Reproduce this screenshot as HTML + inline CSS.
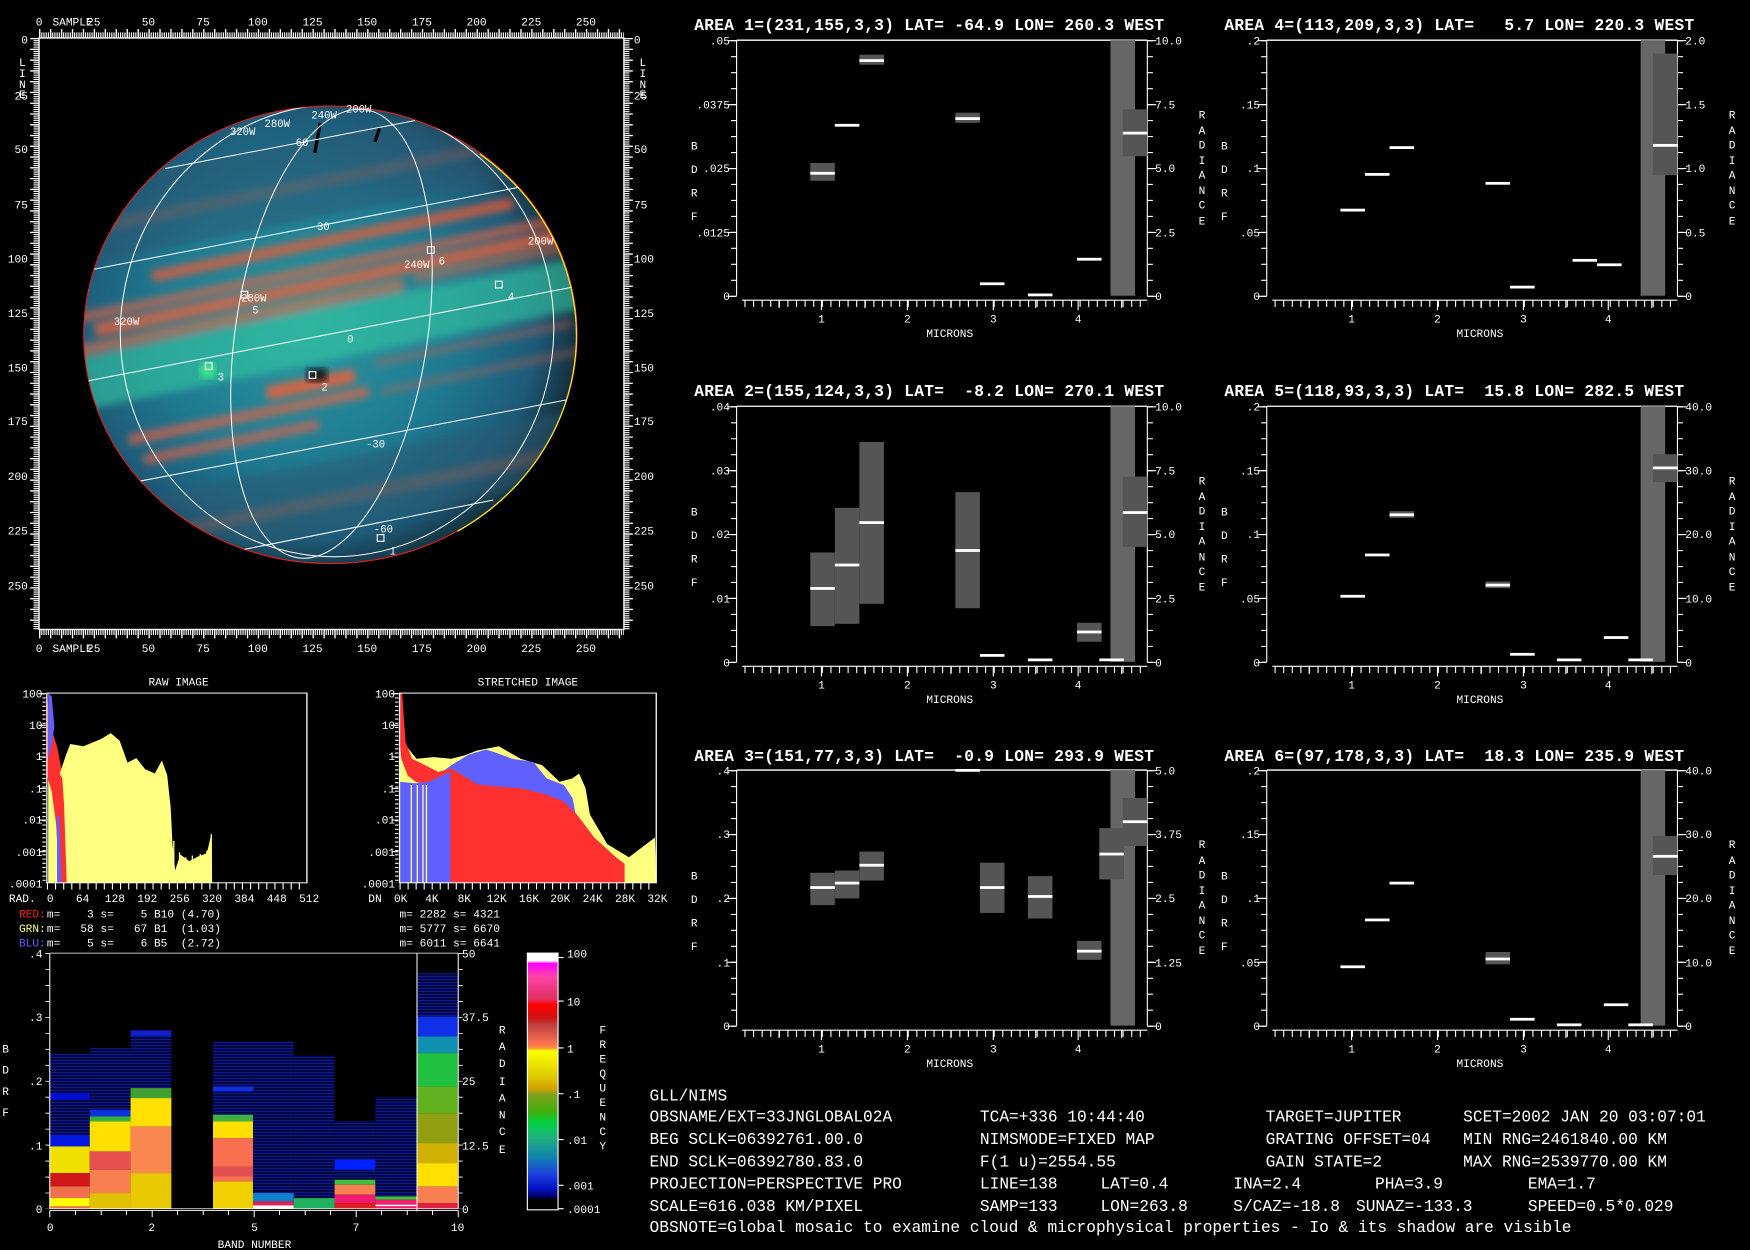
<!DOCTYPE html>
<html><head><meta charset="utf-8"><style>
html,body{margin:0;padding:0;background:#000;width:1750px;height:1250px;overflow:hidden}
svg{display:block}
text{font-family:"Liberation Mono",monospace;fill:#fff;white-space:pre}
.t{font-size:14.5px;font-weight:bold}
.s{font-size:9.5px}
.m{font-size:10px}
.b{font-size:14.5px}
.e{text-anchor:end}
.c{text-anchor:middle}
</style></head><body>
<svg width="1750" height="1250" viewBox="0 0 1568 1120" preserveAspectRatio="none" xmlns="http://www.w3.org/2000/svg">
<defs>
<radialGradient id="jg" cx="0.45" cy="0.48" r="0.55">
<stop offset="0" stop-color="#2a98a0"/><stop offset="0.55" stop-color="#1f7a92"/><stop offset="0.85" stop-color="#1e5a78"/><stop offset="1" stop-color="#14303e"/>
</radialGradient>
<clipPath id="jc"><ellipse cx="296" cy="300" rx="221" ry="205"/></clipPath>
<filter id="bl"><feGaussianBlur stdDeviation="3.5"/></filter>
<linearGradient id="cb" x1="0" y1="0" x2="0" y2="1">
<stop offset="0" stop-color="#fff"/><stop offset="0.03" stop-color="#fff"/><stop offset="0.04" stop-color="#f0f"/><stop offset="0.09" stop-color="#f4a"/><stop offset="0.18" stop-color="#e03060"/><stop offset="0.2" stop-color="#f00"/><stop offset="0.25" stop-color="#d01010"/><stop offset="0.28" stop-color="#c04040"/><stop offset="0.35" stop-color="#f87050"/><stop offset="0.37" stop-color="#ff9040"/><stop offset="0.38" stop-color="#ffff00"/><stop offset="0.47" stop-color="#e0d000"/><stop offset="0.53" stop-color="#d0a000"/><stop offset="0.55" stop-color="#80a020"/><stop offset="0.62" stop-color="#40b010"/><stop offset="0.66" stop-color="#00d040"/><stop offset="0.72" stop-color="#20b080"/><stop offset="0.8" stop-color="#1080b0"/><stop offset="0.86" stop-color="#2040e0"/><stop offset="0.92" stop-color="#0010c0"/><stop offset="0.95" stop-color="#000060"/><stop offset="0.96" stop-color="#000"/><stop offset="1" stop-color="#000"/>
</linearGradient>
<pattern id="bs" width="10" height="9" patternUnits="userSpaceOnUse"><rect width="10" height="9" fill="#000"/><rect y="0" width="10" height="3" fill="#1020c0"/><rect y="5" width="10" height="1.5" fill="#0010a0"/></pattern>
<g id="pf" stroke="#fff" fill="none">
<line x1="660" y1="36" x2="1028" y2="36" stroke-width="1.2"/>
<line x1="660" y1="36" x2="660" y2="265"/>
<line x1="657.5" y1="36" x2="657.5" y2="266" stroke-width="5" stroke-dasharray="1 13.31"/>
<line x1="656" y1="36" x2="656" y2="266" stroke-width="8" stroke-dasharray="1 56.25"/>
<line x1="1028" y1="36" x2="1028" y2="265"/>
<line x1="1030.5" y1="36" x2="1030.5" y2="266" stroke-width="5" stroke-dasharray="1 13.31"/>
<line x1="1032" y1="36" x2="1032" y2="266" stroke-width="8" stroke-dasharray="1 56.25"/>
<line x1="665" y1="269" x2="1028" y2="269"/>
<line x1="667" y1="272" x2="1029" y2="272" stroke-width="6" stroke-dasharray="1 6.7"/>
<path d="M736 269v9M813 269v9M890 269v9M966 269v9M698 269v7M775 269v7M852 269v7M928 269v7M1005 269v7"/>
</g>
</defs>
<rect width="1568" height="1120" fill="#000"/>

<!-- JUPITER IMAGE -->
<g>
<ellipse cx="296" cy="300" rx="221" ry="205" fill="url(#jg)"/>
<g clip-path="url(#jc)" filter="url(#bl)">
<g transform="rotate(-11.5 296 300)">
<rect x="60" y="276" width="480" height="46" fill="#30c8a0" opacity="0.6"/>
<rect x="150" y="212" width="330" height="10" fill="#f05a30" opacity="0.75"/>
<rect x="60" y="236" width="480" height="8" fill="#e86040" opacity="0.7"/>
<rect x="90" y="248" width="430" height="12" fill="#f06038" opacity="0.75"/>
<rect x="70" y="264" width="300" height="10" fill="#e07048" opacity="0.65"/>
<rect x="380" y="262" width="140" height="8" fill="#e07048" opacity="0.5"/>
<rect x="230" y="334" width="80" height="12" fill="#ff5a30" opacity="0.8"/>
<rect x="330" y="330" width="180" height="6" fill="#c06050" opacity="0.5"/>
<rect x="100" y="352" width="220" height="9" fill="#f06040" opacity="0.7"/>
<rect x="330" y="356" width="200" height="6" fill="#c06050" opacity="0.45"/>
<rect x="110" y="372" width="160" height="9" fill="#f06040" opacity="0.65"/>
<rect x="60" y="410" width="480" height="60" fill="#2a5a70" opacity="0.5"/>
<rect x="60" y="125" width="480" height="70" fill="#2a5870" opacity="0.5"/>
<rect x="60" y="440" width="480" height="10" fill="#a06050" opacity="0.35"/>
<rect x="60" y="160" width="480" height="8" fill="#a06050" opacity="0.35"/>
</g>
</g>
<ellipse cx="296" cy="300" rx="221" ry="205" fill="none" stroke="#e02020" stroke-width="1"/>
<path d="M430 138 A221 205 0 0 1 410 476" fill="none" stroke="#e8e030" stroke-width="1.2"/>
<circle cx="186" cy="332" r="7" fill="#40ff80" opacity="0.8" filter="url(#bl)"/>
<rect x="275" y="330" width="18" height="12" fill="#000" opacity="0.8" filter="url(#bl)"/>
<path d="M287 110 L282 137 M340 115 L336 127" stroke="#000" stroke-width="3"/>
<g clip-path="url(#jc)" stroke="#fff" fill="none" stroke-width="0.9">
<line x1="148" y1="151" x2="372" y2="108"/>
<line x1="80" y1="242" x2="490" y2="163"/>
<line x1="70" y1="343" x2="530" y2="254"/>
<line x1="110" y1="434" x2="520" y2="356"/>
<line x1="215" y1="493" x2="442" y2="448"/>
<ellipse cx="297" cy="299" rx="86" ry="203" transform="rotate(8.6 297 299)"/>
<ellipse cx="302" cy="296" rx="194" ry="203" transform="rotate(8.6 302 296)"/>
</g>
<g fill="none" stroke="#fff" stroke-width="1">
<rect x="383" y="221" width="6" height="6"/><rect x="444" y="252" width="6" height="6"/><rect x="216" y="261" width="6" height="6"/><rect x="184" y="325" width="6" height="6"/><rect x="277" y="333" width="6" height="6"/><rect x="338" y="479" width="6" height="6"/>
</g>
<g class="s">
<text x="279" y="106">240W</text><text x="310" y="101">200W</text><text x="237" y="114">280W</text><text x="206" y="121">320W</text><text x="265" y="131">60</text><text x="284" y="206">30</text><text x="311" y="307">0</text><text x="328" y="401">-30</text><text x="335" y="477">-60</text><text x="473" y="219">200W</text><text x="362" y="240">240W</text><text x="393" y="237">6</text><text x="455" y="269">4</text><text x="216" y="270">280W</text><text x="226" y="281">5</text><text x="102" y="291">320W</text><text x="195" y="341">3</text><text x="288" y="350">2</text><text x="349" y="497">1</text>
</g>
</g>
<!-- image frame -->
<g stroke="#fff" fill="none">
<rect x="35" y="34" width="524" height="530" stroke-width="1.2"/>
<line x1="35" y1="31.5" x2="559" y2="31.5" stroke-width="5" stroke-dasharray="1 0.96"/>
<line x1="35" y1="30" x2="559" y2="30" stroke-width="8" stroke-dasharray="1.2 8.6"/>
<line x1="35" y1="566.5" x2="559" y2="566.5" stroke-width="5" stroke-dasharray="1 0.96"/>
<line x1="35" y1="568" x2="559" y2="568" stroke-width="8" stroke-dasharray="1.2 8.6"/>
<line x1="32.5" y1="34" x2="32.5" y2="564" stroke-width="5" stroke-dasharray="1 0.93"/>
<line x1="31" y1="34" x2="31" y2="564" stroke-width="8" stroke-dasharray="1.2 8.45"/>
<line x1="561.5" y1="34" x2="561.5" y2="564" stroke-width="5" stroke-dasharray="1 0.93"/>
<line x1="563" y1="34" x2="563" y2="564" stroke-width="8" stroke-dasharray="1.2 8.45"/>
</g>
<g class="m">
<text x="35" y="23" class="c">0</text><text x="65" y="23" class="c">SAMPLE</text><text x="84" y="23" class="c">25</text><text x="133" y="23" class="c">50</text><text x="182" y="23" class="c">75</text><text x="231" y="23" class="c">100</text><text x="280" y="23" class="c">125</text><text x="329" y="23" class="c">150</text><text x="378" y="23" class="c">175</text><text x="427" y="23" class="c">200</text><text x="476" y="23" class="c">225</text><text x="525" y="23" class="c">250</text>
<text x="35" y="584" class="c">0</text><text x="65" y="584" class="c">SAMPLE</text><text x="84" y="584" class="c">25</text><text x="133" y="584" class="c">50</text><text x="182" y="584" class="c">75</text><text x="231" y="584" class="c">100</text><text x="280" y="584" class="c">125</text><text x="329" y="584" class="c">150</text><text x="378" y="584" class="c">175</text><text x="427" y="584" class="c">200</text><text x="476" y="584" class="c">225</text><text x="525" y="584" class="c">250</text>
<g class="e"><text x="25" y="39">0</text><text x="25" y="89">25</text><text x="25" y="137">50</text><text x="25" y="187">75</text><text x="25" y="235">100</text><text x="25" y="284">125</text><text x="25" y="333">150</text><text x="25" y="381">175</text><text x="25" y="430">200</text><text x="25" y="479">225</text><text x="25" y="528">250</text></g>
<text x="568" y="39">0</text><text x="568" y="89">25</text><text x="568" y="137">50</text><text x="568" y="187">75</text><text x="568" y="235">100</text><text x="568" y="284">125</text><text x="568" y="333">150</text><text x="568" y="381">175</text><text x="568" y="430">200</text><text x="568" y="479">225</text><text x="568" y="528">250</text>
<text x="17" y="59">L</text><text x="17" y="69">I</text><text x="17" y="79">N</text><text x="17" y="88">E</text>
<text x="573" y="59">L</text><text x="573" y="69">I</text><text x="573" y="79">N</text><text x="573" y="88">E</text>
</g>

<!-- HISTOGRAMS -->
<text x="160" y="614" class="m c">RAW IMAGE</text>
<text x="473" y="614" class="m c">STRETCHED IMAGE</text>
<g transform="translate(42,621) scale(0.3949,0.2941) translate(-117,-100)">
<polygon fill="#ffff80" points="120,678 120,250 150,330 160,290 170,255 200,262 240,240 262,222 282,245 300,312 320,298 340,332 362,345 378,305 390,350 398,450 402,560 408,640 420,592 440,612 460,598 480,588 490,530 492,678"/>
<path d="M405 550V640M418 585V630M432 600V640M447 595V640M465 590V635M480 580V620M490 530V678" stroke="#ffff80" stroke-width="3"/>
<polygon fill="#ff3030" points="117,100 125,200 140,262 150,330 146,345 152,360 156,440 162,678 145,678 138,500 128,400 117,350"/>
<polygon fill="#6060ff" points="120,100 128,110 134,200 128,260 120,300"/>
<polygon fill="#6060ff" points="140,480 146,470 150,678 140,678"/>
<rect x="117" y="100" width="590" height="578" fill="none" stroke="#fff" stroke-width="3"/>
</g>
<g transform="translate(358,621) scale(0.3885,0.2941) translate(-921,-100)">
<polygon fill="#ffff80" points="921,678 921,100 930,250 960,300 1000,295 1040,300 1070,290 1100,275 1150,262 1200,300 1250,320 1290,370 1320,360 1335,345 1350,390 1360,470 1400,560 1450,600 1510,540 1513,678"/>
<polygon fill="#6060ff" points="921,678 921,370 960,375 1000,360 1040,320 1080,288 1120,272 1140,280 1180,300 1230,310 1260,360 1300,380 1320,420 1340,560 1360,640 1400,678"/>
<polygon fill="#ff3030" points="921,100 927,100 935,250 950,300 980,320 1010,340 1040,330 1060,345 1100,378 1150,385 1200,390 1250,405 1300,430 1330,470 1370,540 1420,600 1440,620 1440,678 1038,678 1038,340 985,372 960,372 940,352 925,300 921,250"/>
<path d="M948 380V678M962 380V678M975 380V678M983 380V678" stroke="#ffff80" stroke-width="3"/>
<rect x="921" y="100" width="592" height="578" fill="none" stroke="#fff" stroke-width="3"/>
</g>
<g stroke="#fff">
<line x1="38" y1="621" x2="38" y2="791" stroke-width="6" stroke-dasharray="1 27.33"/>
<line x1="39.5" y1="621" x2="39.5" y2="791" stroke-width="3" stroke-dasharray="1 2.8"/>
<line x1="42" y1="794" x2="275" y2="794" stroke-width="6" stroke-dasharray="1 6.28"/>
<line x1="354" y1="621" x2="354" y2="791" stroke-width="6" stroke-dasharray="1 27.33"/>
<line x1="355.5" y1="621" x2="355.5" y2="791" stroke-width="3" stroke-dasharray="1 2.8"/>
<line x1="358" y1="794" x2="588" y2="794" stroke-width="6" stroke-dasharray="1 6.19"/>
</g>
<g class="m e">
<text x="38" y="625">100</text><text x="38" y="653">10</text><text x="38" y="681">1</text><text x="38" y="710">.1</text><text x="38" y="738">.01</text><text x="38" y="767">.001</text><text x="38" y="795">.0001</text>
<text x="354" y="625">100</text><text x="354" y="653">10</text><text x="354" y="681">1</text><text x="354" y="710">.1</text><text x="354" y="738">.01</text><text x="354" y="767">.001</text><text x="354" y="795">.0001</text>
</g>
<g class="m">
<text x="8" y="808">RAD.</text>
<text x="45" y="808" class="c">0</text><text x="74" y="808" class="c">64</text><text x="103" y="808" class="c">128</text><text x="132" y="808" class="c">192</text><text x="161" y="808" class="c">256</text><text x="190" y="808" class="c">320</text><text x="219" y="808" class="c">384</text><text x="248" y="808" class="c">448</text><text x="277" y="808" class="c">512</text>
<text x="336" y="808" class="c">DN</text><text x="359" y="808" class="c">0K</text><text x="387" y="808" class="c">4K</text><text x="416" y="808" class="c">8K</text><text x="445" y="808" class="c">12K</text><text x="474" y="808" class="c">16K</text><text x="502" y="808" class="c">20K</text><text x="531" y="808" class="c">24K</text><text x="560" y="808" class="c">28K</text><text x="589" y="808" class="c">32K</text>
<text x="17" y="822" style="fill:#ff2020">RED:</text><text x="42" y="822">m=    3 s=    5 B10 (4.70)</text>
<text x="17" y="835" style="fill:#ffff80">GRN:</text><text x="42" y="835">m=   58 s=   67 B1  (1.03)</text>
<text x="17" y="848" style="fill:#6060ff">BLU:</text><text x="42" y="848">m=    5 s=    6 B5  (2.72)</text>
<text x="358" y="822">m= 2282 s= 4321</text>
<text x="358" y="835">m= 5777 s= 6670</text>
<text x="358" y="848">m= 6011 s= 6641</text>
</g>

<!-- BAND CHART -->
<g transform="translate(44.6,854) scale(0.3656,0.2986) translate(-122,-40)">
<rect x="122" y="342" width="98" height="278" fill="url(#bs)"/>
<rect x="122" y="460" width="98" height="20" fill="#0010d0"/><rect x="122" y="585" width="98" height="35" fill="#0018e0"/>
<rect x="122" y="620" width="98" height="80" fill="#f0e000"/><rect x="122" y="700" width="98" height="40" fill="#d01818"/><rect x="122" y="740" width="98" height="35" fill="#f07050"/><rect x="122" y="775" width="98" height="25" fill="#ffff00"/><rect x="122" y="800" width="98" height="7" fill="#f07050"/>
<rect x="220" y="325" width="100" height="205" fill="url(#bs)"/><rect x="220" y="510" width="100" height="20" fill="#1030e0"/>
<rect x="220" y="530" width="100" height="15" fill="#30b040"/><rect x="220" y="545" width="100" height="90" fill="#ffe000"/><rect x="220" y="635" width="100" height="55" fill="#e85050"/><rect x="220" y="690" width="100" height="70" fill="#f88050"/><rect x="220" y="760" width="100" height="47" fill="#e0c000"/>
<rect x="320" y="272" width="100" height="173" fill="url(#bs)"/><rect x="320" y="272" width="100" height="16" fill="#1020d0"/>
<rect x="320" y="445" width="100" height="30" fill="#40a030"/><rect x="320" y="475" width="100" height="85" fill="#ffe000"/><rect x="320" y="560" width="100" height="140" fill="#f88850"/><rect x="320" y="700" width="100" height="107" fill="#e8c800"/>
<rect x="522" y="305" width="98" height="220" fill="url(#bs)"/><rect x="522" y="440" width="98" height="15" fill="#1030e0"/>
<rect x="522" y="525" width="98" height="20" fill="#40b040"/><rect x="522" y="545" width="98" height="50" fill="#ffe000"/><rect x="522" y="595" width="98" height="130" fill="#f87050"/><rect x="522" y="680" width="98" height="30" fill="#e05050"/><rect x="522" y="725" width="98" height="82" fill="#f0d000"/>
<rect x="620" y="305" width="100" height="455" fill="url(#bs)"/><rect x="620" y="760" width="100" height="25" fill="#1080d0"/><rect x="620" y="785" width="100" height="12" fill="#e02050"/><rect x="620" y="797" width="100" height="10" fill="#fff"/>
<rect x="720" y="348" width="100" height="427" fill="url(#bs)"/><rect x="720" y="775" width="100" height="32" fill="#20b060"/>
<rect x="820" y="543" width="100" height="177" fill="url(#bs)"/><rect x="820" y="660" width="100" height="30" fill="#0020ff"/><rect x="820" y="720" width="100" height="15" fill="#40c040"/><rect x="820" y="735" width="100" height="30" fill="#f88050"/><rect x="820" y="765" width="100" height="25" fill="#f01870"/><rect x="820" y="790" width="100" height="17" fill="#e02020"/>
<rect x="920" y="472" width="102" height="298" fill="url(#bs)"/><rect x="920" y="770" width="102" height="10" fill="#40c040"/><rect x="920" y="780" width="102" height="27" fill="#f02070"/><rect x="920" y="795" width="102" height="4" fill="#fff"/>
<rect x="1022" y="100" width="100" height="190" fill="url(#bs)"/><rect x="1022" y="230" width="100" height="60" fill="#1030e8"/><rect x="1022" y="290" width="100" height="50" fill="#1090b0"/><rect x="1022" y="340" width="100" height="100" fill="#20c040"/><rect x="1022" y="440" width="100" height="80" fill="#60b020"/><rect x="1022" y="520" width="100" height="90" fill="#90a010"/><rect x="1022" y="610" width="100" height="60" fill="#d0b000"/><rect x="1022" y="670" width="100" height="70" fill="#ffe000"/><rect x="1022" y="740" width="100" height="50" fill="#f88050"/><rect x="1022" y="790" width="100" height="17" fill="#e02040"/>
<g stroke="#fff" fill="none" stroke-width="2.5">
<line x1="122" y1="40" x2="1123" y2="40"/><line x1="122" y1="40" x2="122" y2="807"/><line x1="1123" y1="40" x2="1123" y2="807"/><line x1="1022" y1="40" x2="1022" y2="815"/><line x1="122" y1="807" x2="1123" y2="807"/>
<line x1="122" y1="812" x2="1123" y2="812"/>
<path d="M122 812v20M185 812v14M248 812v14M310 812v14M373 812v20M435 812v14M498 812v14M560 812v14M623 812v20M685 812v14M748 812v14M810 812v14M873 812v20M935 812v14M998 812v14M1060 812v14M1123 812v20"/>
<line x1="116" y1="40" x2="116" y2="807" stroke-width="10" stroke-dasharray="2.5 45.4"/>
<line x1="1129" y1="40" x2="1129" y2="807" stroke-width="10" stroke-dasharray="2.5 45.4"/>
</g>
</g>
<rect x="472.5" y="854" width="27.5" height="230" fill="url(#cb)" stroke="#fff" stroke-width="1"/>
<path d="M500 858h5M500 897h5M500 939h5M500 980h5M500 1021h5M500 1062h5M500 1083h5" stroke="#fff"/>
<g class="m">
<g class="e"><text x="38" y="858">.4</text><text x="38" y="915">.3</text><text x="38" y="972">.2</text><text x="38" y="1030">.1</text><text x="38" y="1087">0</text></g>
<text x="414" y="858">50</text><text x="414" y="915">37.5</text><text x="414" y="972">25</text><text x="414" y="1030">12.5</text><text x="414" y="1087">0</text>
<text x="508" y="858">100</text><text x="508" y="901">10</text><text x="508" y="943">1</text><text x="508" y="984">.1</text><text x="508" y="1025">.01</text><text x="508" y="1066">.001</text><text x="508" y="1087">.0001</text>
<text x="45" y="1103" class="c">0</text><text x="136" y="1103" class="c">2</text><text x="228" y="1103" class="c">5</text><text x="319" y="1103" class="c">7</text><text x="410" y="1103" class="c">10</text>
<text x="228" y="1118" class="c">BAND NUMBER</text>
<text x="2" y="943">B</text><text x="2" y="962">D</text><text x="2" y="981">R</text><text x="2" y="1000">F</text>
<text x="447" y="926">R</text><text x="447" y="941">A</text><text x="447" y="956">D</text><text x="447" y="972">I</text><text x="447" y="987">A</text><text x="447" y="1002">N</text><text x="447" y="1017">C</text><text x="447" y="1033">E</text>
<text x="537" y="926">F</text><text x="537" y="939">R</text><text x="537" y="952">E</text><text x="537" y="965">Q</text><text x="537" y="978">U</text><text x="537" y="991">E</text><text x="537" y="1004">N</text><text x="537" y="1017">C</text><text x="537" y="1030">Y</text>
</g>

<!-- SPECTRA PLOTS -->
<use href="#pf"/>
<use href="#pf" transform="translate(475,0)"/>
<use href="#pf" transform="translate(0,328)"/>
<use href="#pf" transform="translate(475,328)"/>
<use href="#pf" transform="translate(0,654)"/>
<use href="#pf" transform="translate(475,654)"/>

<g fill="#555">
<rect x="726" y="146" width="22" height="16"/><rect x="770" y="49" width="22" height="9"/><rect x="856" y="101" width="22" height="9"/>
<rect x="995" y="36" width="22" height="229" fill="#666"/><rect x="1006" y="98" width="22" height="42"/>
<rect x="1470" y="36" width="22" height="229" fill="#666"/><rect x="1481" y="48" width="22" height="109"/>
<rect x="726" y="495" width="22" height="66"/><rect x="748" y="455" width="22" height="104"/><rect x="770" y="396" width="22" height="145"/><rect x="856" y="441" width="22" height="104"/><rect x="965" y="558" width="22" height="17"/>
<rect x="995" y="364" width="22" height="229" fill="#666"/><rect x="1006" y="427" width="22" height="63"/>
<rect x="1245" y="458" width="22" height="6"/><rect x="1331" y="521" width="22" height="6"/>
<rect x="1470" y="364" width="22" height="229" fill="#666"/><rect x="1481" y="407" width="22" height="25"/>
<rect x="726" y="782" width="22" height="29"/><rect x="748" y="780" width="22" height="25"/><rect x="770" y="763" width="22" height="26"/><rect x="878" y="773" width="22" height="45"/><rect x="921" y="785" width="22" height="38"/><rect x="965" y="843" width="22" height="17"/>
<rect x="995" y="690" width="22" height="229" fill="#666"/><rect x="985" y="742" width="22" height="46"/><rect x="1006" y="715" width="22" height="43"/>
<rect x="1331" y="853" width="22" height="11"/>
<rect x="1470" y="690" width="22" height="229" fill="#666"/><rect x="1481" y="749" width="22" height="35"/>
</g>
<g fill="#fff">
<rect x="726" y="154" width="22" height="2.5"/><rect x="748" y="111" width="22" height="2.5"/><rect x="770" y="53" width="22" height="2.5"/><rect x="856" y="105" width="22" height="2.5"/><rect x="878" y="253" width="22" height="2.5"/><rect x="921" y="263" width="22" height="2.5"/><rect x="965" y="231" width="22" height="2.5"/><rect x="1006" y="118" width="22" height="2.5"/>
<rect x="1201" y="187" width="22" height="2.5"/><rect x="1223" y="155" width="22" height="2.5"/><rect x="1245" y="131" width="22" height="2.5"/><rect x="1331" y="163" width="22" height="2.5"/><rect x="1353" y="256" width="22" height="2.5"/><rect x="1409" y="232" width="22" height="2.5"/><rect x="1431" y="236" width="22" height="2.5"/><rect x="1481" y="129" width="22" height="2.5"/>
<rect x="726" y="526" width="22" height="2.5"/><rect x="748" y="505" width="22" height="2.5"/><rect x="770" y="467" width="22" height="2.5"/><rect x="856" y="492" width="22" height="2.5"/><rect x="878" y="586" width="22" height="2.5"/><rect x="921" y="590" width="22" height="2.5"/><rect x="965" y="565" width="22" height="2.5"/><rect x="985" y="590" width="22" height="2.5"/><rect x="1006" y="458" width="22" height="2.5"/>
<rect x="1201" y="533" width="22" height="2.5"/><rect x="1223" y="496" width="22" height="2.5"/><rect x="1245" y="460" width="22" height="2.5"/><rect x="1331" y="523" width="22" height="2.5"/><rect x="1353" y="585" width="22" height="2.5"/><rect x="1395" y="590" width="22" height="2.5"/><rect x="1437" y="570" width="22" height="2.5"/><rect x="1459" y="590" width="22" height="2.5"/><rect x="1481" y="418" width="22" height="2.5"/>
<rect x="726" y="794" width="22" height="2.5"/><rect x="748" y="790" width="22" height="2.5"/><rect x="770" y="774" width="22" height="2.5"/><rect x="856" y="689" width="22" height="2.5"/><rect x="878" y="794" width="22" height="2.5"/><rect x="921" y="802" width="22" height="2.5"/><rect x="965" y="851" width="22" height="2.5"/><rect x="985" y="764" width="22" height="2.5"/><rect x="1006" y="735" width="22" height="2.5"/>
<rect x="1201" y="865" width="22" height="2.5"/><rect x="1223" y="823" width="22" height="2.5"/><rect x="1245" y="790" width="22" height="2.5"/><rect x="1331" y="858" width="22" height="2.5"/><rect x="1353" y="912" width="22" height="2.5"/><rect x="1395" y="917" width="22" height="2.5"/><rect x="1437" y="899" width="22" height="2.5"/><rect x="1459" y="917" width="22" height="2.5"/><rect x="1481" y="766" width="22" height="2.5"/>
</g>

<g class="t">
<text x="622" y="27" textLength="421" lengthAdjust="spacing">AREA 1=(231,155,3,3) LAT= -64.9 LON= 260.3 WEST</text>
<text x="1097" y="27" textLength="421" lengthAdjust="spacing">AREA 4=(113,209,3,3) LAT=   5.7 LON= 220.3 WEST</text>
<text x="622" y="355" textLength="421" lengthAdjust="spacing">AREA 2=(155,124,3,3) LAT=  -8.2 LON= 270.1 WEST</text>
<text x="1097" y="355" textLength="412" lengthAdjust="spacing">AREA 5=(118,93,3,3) LAT=  15.8 LON= 282.5 WEST</text>
<text x="622" y="682" textLength="412" lengthAdjust="spacing">AREA 3=(151,77,3,3) LAT=  -0.9 LON= 293.9 WEST</text>
<text x="1097" y="682" textLength="412" lengthAdjust="spacing">AREA 6=(97,178,3,3) LAT=  18.3 LON= 235.9 WEST</text>
</g>
<g class="m">
<g class="e">
<text x="654" y="40">.05</text><text x="654" y="97">.0375</text><text x="654" y="154">.025</text><text x="654" y="212">.0125</text><text x="654" y="269">0</text>
<text x="1129" y="40">.2</text><text x="1129" y="97">.15</text><text x="1129" y="154">.1</text><text x="1129" y="212">.05</text><text x="1129" y="269">0</text>
<text x="654" y="368">.04</text><text x="654" y="425">.03</text><text x="654" y="482">.02</text><text x="654" y="540">.01</text><text x="654" y="597">0</text>
<text x="1129" y="368">.2</text><text x="1129" y="425">.15</text><text x="1129" y="482">.1</text><text x="1129" y="540">.05</text><text x="1129" y="597">0</text>
<text x="654" y="694">.4</text><text x="654" y="751">.3</text><text x="654" y="808">.2</text><text x="654" y="866">.1</text><text x="654" y="923">0</text>
<text x="1129" y="694">.2</text><text x="1129" y="751">.15</text><text x="1129" y="808">.1</text><text x="1129" y="866">.05</text><text x="1129" y="923">0</text>
</g>
<text x="1035" y="40">10.0</text><text x="1035" y="97">7.5</text><text x="1035" y="154">5.0</text><text x="1035" y="212">2.5</text><text x="1035" y="269">0</text>
<text x="1510" y="40">2.0</text><text x="1510" y="97">1.5</text><text x="1510" y="154">1.0</text><text x="1510" y="212">0.5</text><text x="1510" y="269">0</text>
<text x="1035" y="368">10.0</text><text x="1035" y="425">7.5</text><text x="1035" y="482">5.0</text><text x="1035" y="540">2.5</text><text x="1035" y="597">0</text>
<text x="1510" y="368">40.0</text><text x="1510" y="425">30.0</text><text x="1510" y="482">20.0</text><text x="1510" y="540">10.0</text><text x="1510" y="597">0</text>
<text x="1035" y="694">5.0</text><text x="1035" y="751">3.75</text><text x="1035" y="808">2.5</text><text x="1035" y="866">1.25</text><text x="1035" y="923">0</text>
<text x="1510" y="694">40.0</text><text x="1510" y="751">30.0</text><text x="1510" y="808">20.0</text><text x="1510" y="866">10.0</text><text x="1510" y="923">0</text>
<g class="c">
<text x="736" y="289">1</text><text x="813" y="289">2</text><text x="890" y="289">3</text><text x="966" y="289">4</text><text x="851" y="302">MICRONS</text>
<text x="1211" y="289">1</text><text x="1288" y="289">2</text><text x="1365" y="289">3</text><text x="1441" y="289">4</text><text x="1326" y="302">MICRONS</text>
<text x="736" y="617">1</text><text x="813" y="617">2</text><text x="890" y="617">3</text><text x="966" y="617">4</text><text x="851" y="630">MICRONS</text>
<text x="1211" y="617">1</text><text x="1288" y="617">2</text><text x="1365" y="617">3</text><text x="1441" y="617">4</text><text x="1326" y="630">MICRONS</text>
<text x="736" y="943">1</text><text x="813" y="943">2</text><text x="890" y="943">3</text><text x="966" y="943">4</text><text x="851" y="956">MICRONS</text>
<text x="1211" y="943">1</text><text x="1288" y="943">2</text><text x="1365" y="943">3</text><text x="1441" y="943">4</text><text x="1326" y="956">MICRONS</text>
</g>
<g>
<text x="619" y="134">B</text><text x="619" y="155">D</text><text x="619" y="176">R</text><text x="619" y="197">F</text>
<text x="1094" y="134">B</text><text x="1094" y="155">D</text><text x="1094" y="176">R</text><text x="1094" y="197">F</text>
<text x="619" y="462">B</text><text x="619" y="483">D</text><text x="619" y="504">R</text><text x="619" y="525">F</text>
<text x="1094" y="462">B</text><text x="1094" y="483">D</text><text x="1094" y="504">R</text><text x="1094" y="525">F</text>
<text x="619" y="788">B</text><text x="619" y="809">D</text><text x="619" y="830">R</text><text x="619" y="851">F</text>
<text x="1094" y="788">B</text><text x="1094" y="809">D</text><text x="1094" y="830">R</text><text x="1094" y="851">F</text>
</g>
<g>
<text x="1074" y="106">R</text><text x="1074" y="120">A</text><text x="1074" y="133">D</text><text x="1074" y="147">I</text><text x="1074" y="160">A</text><text x="1074" y="174">N</text><text x="1074" y="187">C</text><text x="1074" y="201">E</text>
</g>
<g transform="translate(475,0)"><text x="1074" y="106">R</text><text x="1074" y="120">A</text><text x="1074" y="133">D</text><text x="1074" y="147">I</text><text x="1074" y="160">A</text><text x="1074" y="174">N</text><text x="1074" y="187">C</text><text x="1074" y="201">E</text></g>
<g transform="translate(0,328)"><text x="1074" y="106">R</text><text x="1074" y="120">A</text><text x="1074" y="133">D</text><text x="1074" y="147">I</text><text x="1074" y="160">A</text><text x="1074" y="174">N</text><text x="1074" y="187">C</text><text x="1074" y="201">E</text></g>
<g transform="translate(475,328)"><text x="1074" y="106">R</text><text x="1074" y="120">A</text><text x="1074" y="133">D</text><text x="1074" y="147">I</text><text x="1074" y="160">A</text><text x="1074" y="174">N</text><text x="1074" y="187">C</text><text x="1074" y="201">E</text></g>
<g transform="translate(0,654)"><text x="1074" y="106">R</text><text x="1074" y="120">A</text><text x="1074" y="133">D</text><text x="1074" y="147">I</text><text x="1074" y="160">A</text><text x="1074" y="174">N</text><text x="1074" y="187">C</text><text x="1074" y="201">E</text></g>
<g transform="translate(475,654)"><text x="1074" y="106">R</text><text x="1074" y="120">A</text><text x="1074" y="133">D</text><text x="1074" y="147">I</text><text x="1074" y="160">A</text><text x="1074" y="174">N</text><text x="1074" y="187">C</text><text x="1074" y="201">E</text></g>
</g>

<!-- INFO TEXT -->
<g class="b">
<text x="582" y="986">GLL/NIMS</text>
<text x="582" y="1005">OBSNAME/EXT=33JNGLOBAL02A</text><text x="878" y="1005">TCA=+336 10:44:40</text><text x="1134" y="1005">TARGET=JUPITER</text><text x="1311" y="1005">SCET=2002 JAN 20 03:07:01</text>
<text x="582" y="1025">BEG SCLK=06392761.00.0</text><text x="878" y="1025">NIMSMODE=FIXED MAP</text><text x="1134" y="1025">GRATING OFFSET=04</text><text x="1311" y="1025">MIN RNG=2461840.00 KM</text>
<text x="582" y="1045">END SCLK=06392780.83.0</text><text x="878" y="1045">F(1 u)=2554.55</text><text x="1134" y="1045">GAIN STATE=2</text><text x="1311" y="1045">MAX RNG=2539770.00 KM</text>
<text x="582" y="1065">PROJECTION=PERSPECTIVE PRO</text><text x="878" y="1065">LINE=138</text><text x="986" y="1065">LAT=0.4</text><text x="1105" y="1065">INA=2.4</text><text x="1232" y="1065">PHA=3.9</text><text x="1369" y="1065">EMA=1.7</text>
<text x="582" y="1085">SCALE=616.038 KM/PIXEL</text><text x="878" y="1085">SAMP=133</text><text x="986" y="1085">LON=263.8</text><text x="1105" y="1085">S/CAZ=-18.8</text><text x="1215" y="1085">SUNAZ=-133.3</text><text x="1369" y="1085">SPEED=0.5*0.029</text>
<text x="582" y="1104">OBSNOTE=Global mosaic to examine cloud &amp; microphysical properties - Io &amp; its shadow are visible</text>
</g>
</svg>
</body></html>
